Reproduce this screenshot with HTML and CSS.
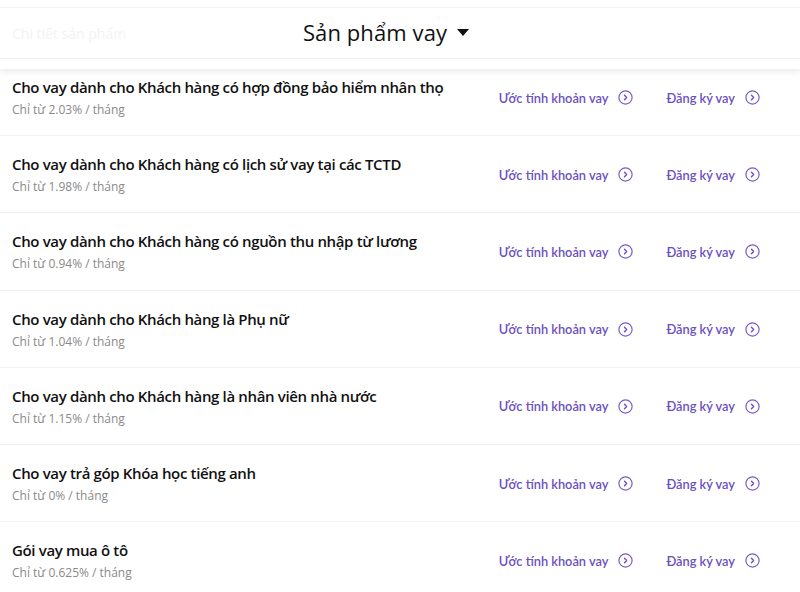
FILE: index.html
```html
<!DOCTYPE html>
<html lang="vi">
<head>
<meta charset="utf-8">
<title>Sản phẩm vay</title>
<link rel="stylesheet" href="styles.css">
</head>
<body>
<div class="page">
  <header class="topbar">
    <div class="topbar-inner">
      <span class="ghost">Chi tiết sản phẩm</span>
      <div class="picker">
        <span class="picker-label">Sản phẩm vay</span>
        <svg class="caret" width="12" height="7" viewBox="0 0 12 7"><path d="M0 0H12L6 7Z" fill="#111"/></svg>
      </div>
    </div>
  </header>
  <ul class="list">
    <li class="row">
      <div class="info"><div class="title">Cho vay dành cho Khách hàng có hợp đồng bảo hiểm nhân thọ</div><div class="rate">Chỉ từ 2.03% / tháng</div></div>
      <div class="actions">
        <a class="act">Ước tính khoản vay<svg class="ico" width="15" height="15" viewBox="0 0 15 15"><circle cx="7.5" cy="7.5" r="6.6" fill="none" stroke="#7a5cc9" stroke-width="1.2"/><path d="M6.5 5.3L8.6 7.5L6.5 9.7" fill="none" stroke="#6a4fbf" stroke-width="1.4" stroke-linecap="round" stroke-linejoin="round"/></svg></a>
        <a class="act">Đăng ký vay<svg class="ico" width="15" height="15" viewBox="0 0 15 15"><circle cx="7.5" cy="7.5" r="6.6" fill="none" stroke="#7a5cc9" stroke-width="1.2"/><path d="M6.5 5.3L8.6 7.5L6.5 9.7" fill="none" stroke="#6a4fbf" stroke-width="1.4" stroke-linecap="round" stroke-linejoin="round"/></svg></a>
      </div>
    </li>
    <li class="row">
      <div class="info"><div class="title">Cho vay dành cho Khách hàng có lịch sử vay tại các TCTD</div><div class="rate">Chỉ từ 1.98% / tháng</div></div>
      <div class="actions">
        <a class="act">Ước tính khoản vay<svg class="ico" width="15" height="15" viewBox="0 0 15 15"><circle cx="7.5" cy="7.5" r="6.6" fill="none" stroke="#7a5cc9" stroke-width="1.2"/><path d="M6.5 5.3L8.6 7.5L6.5 9.7" fill="none" stroke="#6a4fbf" stroke-width="1.4" stroke-linecap="round" stroke-linejoin="round"/></svg></a>
        <a class="act">Đăng ký vay<svg class="ico" width="15" height="15" viewBox="0 0 15 15"><circle cx="7.5" cy="7.5" r="6.6" fill="none" stroke="#7a5cc9" stroke-width="1.2"/><path d="M6.5 5.3L8.6 7.5L6.5 9.7" fill="none" stroke="#6a4fbf" stroke-width="1.4" stroke-linecap="round" stroke-linejoin="round"/></svg></a>
      </div>
    </li>
    <li class="row">
      <div class="info"><div class="title">Cho vay dành cho Khách hàng có nguồn thu nhập từ lương</div><div class="rate">Chỉ từ 0.94% / tháng</div></div>
      <div class="actions">
        <a class="act">Ước tính khoản vay<svg class="ico" width="15" height="15" viewBox="0 0 15 15"><circle cx="7.5" cy="7.5" r="6.6" fill="none" stroke="#7a5cc9" stroke-width="1.2"/><path d="M6.5 5.3L8.6 7.5L6.5 9.7" fill="none" stroke="#6a4fbf" stroke-width="1.4" stroke-linecap="round" stroke-linejoin="round"/></svg></a>
        <a class="act">Đăng ký vay<svg class="ico" width="15" height="15" viewBox="0 0 15 15"><circle cx="7.5" cy="7.5" r="6.6" fill="none" stroke="#7a5cc9" stroke-width="1.2"/><path d="M6.5 5.3L8.6 7.5L6.5 9.7" fill="none" stroke="#6a4fbf" stroke-width="1.4" stroke-linecap="round" stroke-linejoin="round"/></svg></a>
      </div>
    </li>
    <li class="row">
      <div class="info"><div class="title">Cho vay dành cho Khách hàng là Phụ nữ</div><div class="rate">Chỉ từ 1.04% / tháng</div></div>
      <div class="actions">
        <a class="act">Ước tính khoản vay<svg class="ico" width="15" height="15" viewBox="0 0 15 15"><circle cx="7.5" cy="7.5" r="6.6" fill="none" stroke="#7a5cc9" stroke-width="1.2"/><path d="M6.5 5.3L8.6 7.5L6.5 9.7" fill="none" stroke="#6a4fbf" stroke-width="1.4" stroke-linecap="round" stroke-linejoin="round"/></svg></a>
        <a class="act">Đăng ký vay<svg class="ico" width="15" height="15" viewBox="0 0 15 15"><circle cx="7.5" cy="7.5" r="6.6" fill="none" stroke="#7a5cc9" stroke-width="1.2"/><path d="M6.5 5.3L8.6 7.5L6.5 9.7" fill="none" stroke="#6a4fbf" stroke-width="1.4" stroke-linecap="round" stroke-linejoin="round"/></svg></a>
      </div>
    </li>
    <li class="row">
      <div class="info"><div class="title">Cho vay dành cho Khách hàng là nhân viên nhà nước</div><div class="rate">Chỉ từ 1.15% / tháng</div></div>
      <div class="actions">
        <a class="act">Ước tính khoản vay<svg class="ico" width="15" height="15" viewBox="0 0 15 15"><circle cx="7.5" cy="7.5" r="6.6" fill="none" stroke="#7a5cc9" stroke-width="1.2"/><path d="M6.5 5.3L8.6 7.5L6.5 9.7" fill="none" stroke="#6a4fbf" stroke-width="1.4" stroke-linecap="round" stroke-linejoin="round"/></svg></a>
        <a class="act">Đăng ký vay<svg class="ico" width="15" height="15" viewBox="0 0 15 15"><circle cx="7.5" cy="7.5" r="6.6" fill="none" stroke="#7a5cc9" stroke-width="1.2"/><path d="M6.5 5.3L8.6 7.5L6.5 9.7" fill="none" stroke="#6a4fbf" stroke-width="1.4" stroke-linecap="round" stroke-linejoin="round"/></svg></a>
      </div>
    </li>
    <li class="row">
      <div class="info"><div class="title">Cho vay trả góp Khóa học tiếng anh</div><div class="rate">Chỉ từ 0% / tháng</div></div>
      <div class="actions">
        <a class="act">Ước tính khoản vay<svg class="ico" width="15" height="15" viewBox="0 0 15 15"><circle cx="7.5" cy="7.5" r="6.6" fill="none" stroke="#7a5cc9" stroke-width="1.2"/><path d="M6.5 5.3L8.6 7.5L6.5 9.7" fill="none" stroke="#6a4fbf" stroke-width="1.4" stroke-linecap="round" stroke-linejoin="round"/></svg></a>
        <a class="act">Đăng ký vay<svg class="ico" width="15" height="15" viewBox="0 0 15 15"><circle cx="7.5" cy="7.5" r="6.6" fill="none" stroke="#7a5cc9" stroke-width="1.2"/><path d="M6.5 5.3L8.6 7.5L6.5 9.7" fill="none" stroke="#6a4fbf" stroke-width="1.4" stroke-linecap="round" stroke-linejoin="round"/></svg></a>
      </div>
    </li>
    <li class="row">
      <div class="info"><div class="title">Gói vay mua ô tô</div><div class="rate">Chỉ từ 0.625% / tháng</div></div>
      <div class="actions">
        <a class="act">Ước tính khoản vay<svg class="ico" width="15" height="15" viewBox="0 0 15 15"><circle cx="7.5" cy="7.5" r="6.6" fill="none" stroke="#7a5cc9" stroke-width="1.2"/><path d="M6.5 5.3L8.6 7.5L6.5 9.7" fill="none" stroke="#6a4fbf" stroke-width="1.4" stroke-linecap="round" stroke-linejoin="round"/></svg></a>
        <a class="act">Đăng ký vay<svg class="ico" width="15" height="15" viewBox="0 0 15 15"><circle cx="7.5" cy="7.5" r="6.6" fill="none" stroke="#7a5cc9" stroke-width="1.2"/><path d="M6.5 5.3L8.6 7.5L6.5 9.7" fill="none" stroke="#6a4fbf" stroke-width="1.4" stroke-linecap="round" stroke-linejoin="round"/></svg></a>
      </div>
    </li>
  </ul>
</div>
</body>
</html>
```
FILE: styles.css
```css
* { box-sizing: border-box; }
html, body { margin: 0; padding: 0; background: #fff; }
body { font-family: "Open Sans", "Noto Sans", sans-serif; color: #111; overflow: hidden; height: 592px; }
.page { position: relative; padding-top: 59px; }
.topbar {
  position: absolute; top: 0; left: 0; right: 0; height: 69px;
  background: #fff; z-index: 2;
  box-shadow: 0 3px 6px rgba(0,0,0,0.08);
  padding-top: 7px;
}
.topbar-inner {
  position: relative;
  height: 52px;
  border-top: 1px solid #f4f4f4;
  border-bottom: 1px solid #f1f1f1;
  display: flex; align-items: center; justify-content: center;
}
.ghost {
  position: absolute; left: 12px; top: 16px;
  font-size: 14px; color: #f3f3f3;
}
.picker { display: flex; align-items: center; gap: 10px; margin-left: -28px; margin-top: -2px; }
.picker-label { font-size: 22px; color: #111; letter-spacing: 0.1px; }
.caret { display: block; margin-top: 1px; }
.list { list-style: none; margin: 0; padding: 0; }
.row {
  height: 77.2px;
  border-bottom: 1px solid #f1f1f1;
  display: flex; align-items: center; justify-content: space-between;
  padding: 0 40px 0 12px;
}
.info { align-self: flex-start; padding-top: 17px; }
.title { font-size: 15px; font-weight: 600; letter-spacing: -0.35px; line-height: 22px; color: #111; }
.rate { font-size: 12px; line-height: 18px; color: #8a8a8a; margin-top: 3px; }
.actions { display: flex; align-items: center; gap: 33px; margin-top: 1px; }
.act {
  display: flex; align-items: center; gap: 10px;
  font-family: Lato, "Open Sans", sans-serif;
  font-size: 12.8px; font-weight: 600; color: #6b50c0; text-decoration: none;
}
.ico { display: block; }
```
